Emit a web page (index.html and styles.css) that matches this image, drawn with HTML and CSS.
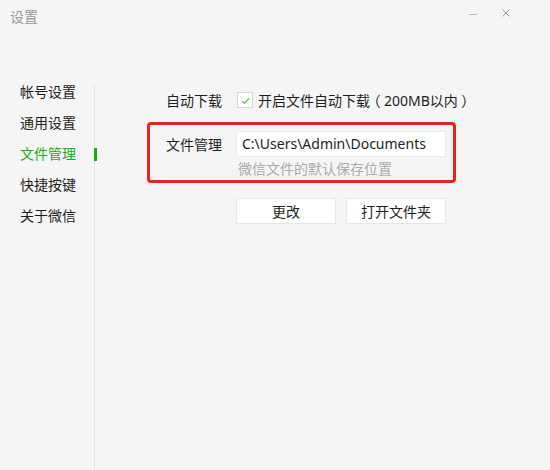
FILE: index.html
```html
<!DOCTYPE html>
<html lang="zh-CN">
<head>
    <meta charset="UTF-8">
    <title>设置</title>
    <link rel="stylesheet" href="styles.css">
</head>
<body>
<div class="window">

    <!-- Title bar -->
    <div class="titlebar">
        <span class="title">设置</span>
        <div class="win-buttons">
            <svg class="win-btn" width="10" height="10" viewBox="0 0 10 10"><path d="M1 6.5h8" stroke="#b5b5b5" stroke-width="1"/></svg>
            <svg class="win-btn" width="10" height="10" viewBox="0 0 10 10"><path d="M1.5 1.5l7 7M8.5 1.5l-7 7" stroke="#9a9a9a" stroke-width="1"/></svg>
        </div>
    </div>

    <div class="main">
        <!-- Side navigation -->
        <ul class="nav">
            <li>帐号设置</li>
            <li>通用设置</li>
            <li class="active">文件管理</li>
            <li>快捷按键</li>
            <li>关于微信</li>
        </ul>
        <div class="divider"></div>

        <!-- File settings -->
        <div class="content">
            <div class="row">
                <span class="label">自动下载</span>
                <label class="check">
                    <span class="box">
                        <svg width="13" height="13" viewBox="0 0 13 13"><path d="M2.8 6.8l2.6 2.4 4.8-5" fill="none" stroke="#4cbf4b" stroke-width="1.1"/></svg>
                    </span>
                    开启文件自动下载<span class="paren">（</span>200MB以内<span class="paren">）</span>
                </label>
            </div>

            <div class="path-box">
                <div class="row">
                    <span class="label">文件管理</span>
                    <div class="path-field">C:\Users\Admin\Documents</div>
                </div>
                <div class="hint">微信文件的默认保存位置</div>
            </div>

            <div class="actions">
                <button>更改</button>
                <button>打开文件夹</button>
            </div>
        </div>
    </div>

</div>
</body>
</html>
```

FILE: styles.css
```css
body {
    margin: 0;
    font-family: "Noto Sans", "Noto Sans CJK SC", sans-serif;
    font-size: 14px;
    color: #1e1e1e;
}
.window {
    width: 550px;
    height: 470px;
    background-color: #f5f5f5;
    display: flex;
    flex-direction: column;
    overflow: hidden;
}
.titlebar {
    height: 40px;
    display: flex;
    justify-content: space-between;
    align-items: flex-start;
    flex-shrink: 0;
}
.title {
    color: #999;
    margin: 7px 0 0 10px;
    line-height: 20px;
}
.win-buttons {
    display: flex;
    gap: 23px;
    margin: 8px 39px 0 0;
}
.win-btn {
    display: block;
}
.main {
    flex: 1;
    display: flex;
}
.nav {
    list-style: none;
    margin: 0;
    padding: 36px 0 0 20px;
    width: 74px;
}
.nav li {
    height: 31px;
    line-height: 31px;
    position: relative;
}
.nav li.active {
    color: #1aad19;
}
.nav li.active::after {
    content: "";
    position: absolute;
    left: 74px;
    top: 10px;
    width: 3px;
    height: 13px;
    background-color: #1aad19;
}
.divider {
    width: 1px;
    margin-top: 45px;
    background-color: #e4e4e4;
}
.content {
    padding: 47px 0 0 52px;
}
.row {
    display: flex;
    align-items: center;
    height: 26px;
    padding-left: 19px;
}
.label {
    width: 70px;
    flex-shrink: 0;
}
.check {
    display: flex;
    align-items: center;
    margin-left: 1px;
}
.box {
    width: 14px;
    height: 14px;
    border: 1px solid #d6d6d6;
    background-color: #fff;
    margin-right: 5px;
    display: flex;
    align-items: center;
    justify-content: center;
}
.paren {
    display: inline-block;
    width: 14px;
    text-align: center;
    font-feature-settings: "halt";
}
.path-box {
    box-sizing: border-box;
    width: 309px;
    margin-top: 9px;
    border: 3px solid #e3261f;
    border-radius: 4px;
    padding: 6px 0 1px 0;
}
.path-box .row {
    padding-left: 16px;
}
.path-field {
    box-sizing: border-box;
    width: 210px;
    height: 26px;
    line-height: 24px;
    padding-left: 5px;
    background-color: #fff;
    border: 1px solid #ebebeb;
    color: #1e1e1e;
}
.hint {
    margin: 2px 0 0 88px;
    line-height: 20px;
    color: #aaa;
}
.actions {
    display: flex;
    gap: 10px;
    margin: 15px 0 0 89px;
}
.actions button {
    width: 100px;
    height: 26px;
    padding: 0;
    font-family: inherit;
    font-size: 14px;
    color: #1e1e1e;
    background-color: #fff;
    border: 1px solid #e6e6e6;
}
```
